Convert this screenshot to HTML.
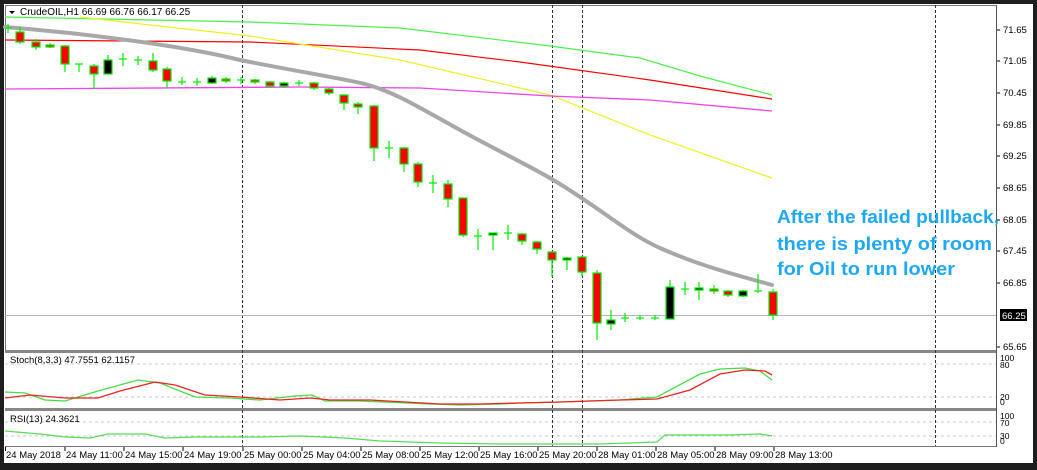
<!DOCTYPE html>
<html><head><meta charset="utf-8"><style>
html,body{margin:0;padding:0;background:#1e1e1e;width:1037px;height:470px;overflow:hidden}
svg{display:block}
text{font-family:"Liberation Sans",sans-serif}
</style></head><body>
<svg width="1037" height="470" viewBox="0 0 1037 470" xmlns="http://www.w3.org/2000/svg">
<rect x="0" y="0" width="1037" height="470" fill="#1e1e1e"/>
<rect x="4" y="4" width="1029" height="459" fill="#fff"/>
<rect x="5.5" y="5.5" width="991" height="345" fill="none" stroke="#777"/>
<rect x="5" y="350" width="992" height="3" fill="#888"/>
<rect x="5" y="408" width="992" height="3" fill="#888"/>
<line x1="5" y1="446.5" x2="997" y2="446.5" stroke="#777"/>
<g stroke="#c8c8c8" stroke-dasharray="3,3">
<line x1="5" y1="364" x2="996" y2="364"/><line x1="5" y1="397" x2="996" y2="397"/>
<line x1="5" y1="422" x2="996" y2="422"/><line x1="5" y1="436" x2="996" y2="436"/>
</g>
<g stroke="#333" stroke-dasharray="3,2">
<line x1="242.5" y1="5" x2="242.5" y2="446"/><line x1="552.5" y1="5" x2="552.5" y2="446"/>
<line x1="582.5" y1="5" x2="582.5" y2="446"/><line x1="935.5" y1="5" x2="935.5" y2="446"/>
</g>
<line x1="5" y1="315.5" x2="996" y2="315.5" stroke="#b0b4bc"/>
<polyline fill="none" stroke="#4cf04c" stroke-width="1.2" points="5,17 250,22 400,28 550,46 640,58 700,76 772,95"/>
<polyline fill="none" stroke="#f00" stroke-width="1.2" points="5,40 250,42 420,50 520,62 650,80 772,99"/>
<polyline fill="none" stroke="#f0f020" stroke-width="1.2" points="80,17 150,25 250,36 400,60 550,95 650,135 772,178"/>
<polyline fill="none" stroke="#ee44ee" stroke-width="1.3" points="5,89 300,87 420,88 550,96 650,100 772,111"/>
<path fill="none" stroke="#a8a8a8" stroke-width="4" stroke-linecap="round" d="M5,27 C80,33 180,45 240,60 C300,72 340,78 365,84 C395,92 420,108 460,130 C500,152 530,166 555,181 C600,208 630,235 660,248 C700,266 740,276 772,285"/>
<g stroke="#00ee00" stroke-width="1.2">
<line x1="8" y1="24" x2="8" y2="33"/><line x1="5" y1="28" x2="12" y2="28"/>
<line x1="20" y1="27" x2="20" y2="44"/><rect x="16" y="32" width="8" height="10" fill="#f00"/>
<line x1="36" y1="39" x2="36" y2="50"/><rect x="32" y="42" width="8" height="5" fill="#f00"/>
<line x1="50" y1="43" x2="50" y2="48"/><rect x="46" y="45" width="8" height="2" fill="#f00"/>
<line x1="65" y1="45" x2="65" y2="72"/><rect x="61" y="46" width="8" height="18" fill="#f00"/>
<line x1="79" y1="64" x2="79" y2="72"/><line x1="75" y1="64" x2="83" y2="64"/>
<line x1="94" y1="64" x2="94" y2="89"/><rect x="90" y="66" width="8" height="8" fill="#f00"/>
<line x1="108" y1="55" x2="108" y2="74"/><rect x="104" y="60" width="8" height="14" fill="#000"/>
<line x1="123" y1="53" x2="123" y2="66"/><line x1="119" y1="59" x2="127" y2="59"/>
<line x1="138" y1="56" x2="138" y2="65"/><line x1="134" y1="60" x2="142" y2="60"/>
<line x1="153" y1="53" x2="153" y2="72"/><rect x="149" y="61" width="8" height="9" fill="#f00"/>
<line x1="167" y1="67" x2="167" y2="88"/><rect x="163" y="69" width="8" height="12" fill="#f00"/>
<line x1="182" y1="77" x2="182" y2="85"/><line x1="178" y1="82" x2="186" y2="82"/>
<line x1="197" y1="78" x2="197" y2="86"/><line x1="193" y1="82" x2="201" y2="82"/>
<line x1="212" y1="76" x2="212" y2="84"/><rect x="208" y="78" width="8" height="5" fill="#000"/>
<line x1="226" y1="77" x2="226" y2="83"/><rect x="222" y="79" width="8" height="2" fill="#f00"/>
<line x1="241" y1="77" x2="241" y2="84"/><line x1="237" y1="80" x2="245" y2="80"/>
<line x1="255" y1="79" x2="255" y2="84"/><rect x="251" y="80" width="8" height="2" fill="#f00"/>
<line x1="270" y1="81" x2="270" y2="88"/><rect x="266" y="82" width="8" height="4" fill="#f00"/>
<line x1="284" y1="82" x2="284" y2="88"/><rect x="280" y="83" width="8" height="3" fill="#000"/>
<line x1="299" y1="80" x2="299" y2="86"/><line x1="295" y1="83" x2="303" y2="83"/>
<line x1="314" y1="82" x2="314" y2="90"/><rect x="310" y="83" width="8" height="5" fill="#f00"/>
<line x1="329" y1="88" x2="329" y2="95"/><rect x="325" y="89" width="8" height="4" fill="#f00"/>
<line x1="344" y1="94" x2="344" y2="110"/><rect x="340" y="95" width="8" height="8" fill="#f00"/>
<line x1="358" y1="102" x2="358" y2="114"/><rect x="354" y="104" width="8" height="3" fill="#f00"/>
<line x1="374" y1="105" x2="374" y2="161"/><rect x="370" y="106" width="8" height="42" fill="#f00"/>
<line x1="389" y1="141" x2="389" y2="158"/><line x1="385" y1="148" x2="393" y2="148"/>
<line x1="404" y1="147" x2="404" y2="172"/><rect x="400" y="148" width="8" height="16" fill="#f00"/>
<line x1="418" y1="162" x2="418" y2="187"/><rect x="414" y="164" width="8" height="18" fill="#f00"/>
<line x1="433" y1="175" x2="433" y2="193"/><line x1="429" y1="183" x2="437" y2="183"/>
<line x1="448" y1="180" x2="448" y2="207"/><rect x="444" y="184" width="8" height="15" fill="#f00"/>
<line x1="463" y1="198" x2="463" y2="237"/><rect x="459" y="198" width="8" height="37" fill="#f00"/>
<line x1="478" y1="229" x2="478" y2="250"/><line x1="474" y1="236" x2="482" y2="236"/>
<line x1="493" y1="233" x2="493" y2="250"/><rect x="489" y="233" width="8" height="2" fill="#000"/>
<line x1="508" y1="225" x2="508" y2="240"/><line x1="504" y1="233" x2="512" y2="233"/>
<line x1="522" y1="233" x2="522" y2="245"/><rect x="518" y="234" width="8" height="7" fill="#f00"/>
<line x1="537" y1="241" x2="537" y2="254"/><rect x="533" y="242" width="8" height="7" fill="#f00"/>
<line x1="552" y1="251" x2="552" y2="277"/><rect x="548" y="252" width="8" height="8" fill="#f00"/>
<line x1="567" y1="257" x2="567" y2="270"/><rect x="563" y="258" width="8" height="2" fill="#000"/>
<line x1="582" y1="256" x2="582" y2="276"/><rect x="578" y="257" width="8" height="15" fill="#f00"/>
<line x1="597" y1="270" x2="597" y2="340"/><rect x="593" y="273" width="8" height="50" fill="#f00"/>
<line x1="611" y1="310" x2="611" y2="330"/><rect x="607" y="320" width="8" height="4" fill="#000"/>
<line x1="625" y1="313" x2="625" y2="322"/><line x1="621" y1="318" x2="629" y2="318"/>
<line x1="640" y1="315" x2="640" y2="320"/><line x1="636" y1="318" x2="644" y2="318"/>
<line x1="655" y1="315" x2="655" y2="320"/><line x1="651" y1="318" x2="659" y2="318"/>
<line x1="670" y1="280" x2="670" y2="319"/><rect x="666" y="287" width="8" height="32" fill="#000"/>
<line x1="685" y1="282" x2="685" y2="295"/><line x1="681" y1="289" x2="689" y2="289"/>
<line x1="699" y1="282" x2="699" y2="300"/><rect x="695" y="288" width="8" height="2" fill="#000"/>
<line x1="714" y1="285" x2="714" y2="294"/><rect x="710" y="289" width="8" height="2" fill="#f00"/>
<line x1="728" y1="290" x2="728" y2="297"/><rect x="724" y="291" width="8" height="4" fill="#f00"/>
<line x1="743" y1="290" x2="743" y2="297"/><rect x="739" y="291" width="8" height="5" fill="#000"/>
<line x1="758" y1="274" x2="758" y2="293"/><line x1="754" y1="291" x2="762" y2="291"/>
<line x1="773" y1="289" x2="773" y2="320"/><rect x="769" y="292" width="8" height="23" fill="#f00"/>
</g>
<polygon points="9,11 15,11 12,14" fill="#000"/>
<text x="20" y="15" font-size="10" fill="#000">CrudeOIL,H1  66.69 66.76 66.17 66.25</text>
<rect x="997" y="5" width="36" height="442" fill="#fff"/>
<line x1="996.5" y1="5" x2="996.5" y2="447" stroke="#555"/>
<g font-size="9.5" fill="#000">
<text x="1003" y="33">71.65</text><text x="1003" y="64">71.05</text><text x="1003" y="96">70.45</text>
<text x="1003" y="128">69.85</text><text x="1003" y="159">69.25</text><text x="1003" y="191">68.65</text>
<text x="1003" y="223">68.05</text><text x="1003" y="254">67.45</text><text x="1003" y="286">66.85</text>
<text x="1003" y="350">65.65</text>
</g>
<g stroke="#000"><line x1="997" y1="30" x2="1000" y2="30"/><line x1="997" y1="61" x2="1000" y2="61"/><line x1="997" y1="93" x2="1000" y2="93"/><line x1="997" y1="125" x2="1000" y2="125"/><line x1="997" y1="156" x2="1000" y2="156"/><line x1="997" y1="188" x2="1000" y2="188"/><line x1="997" y1="220" x2="1000" y2="220"/><line x1="997" y1="251" x2="1000" y2="251"/><line x1="997" y1="283" x2="1000" y2="283"/><line x1="997" y1="347" x2="1000" y2="347"/></g>
<rect x="1000" y="309" width="27" height="12" fill="#000"/>
<text x="1002" y="319" font-size="9.5" fill="#fff">66.25</text>
<g font-size="18.5" font-weight="bold" fill="#1ea7f2" textLength="220">
<text x="777" y="223" textLength="222" lengthAdjust="spacingAndGlyphs">After the failed pullback,</text>
<text x="777" y="250" textLength="215" lengthAdjust="spacingAndGlyphs">there is plenty of room</text>
<text x="777" y="275" textLength="178" lengthAdjust="spacingAndGlyphs">for Oil to run lower</text>
</g>
<g font-size="8.5" fill="#000">
<text x="1000" y="361">100</text><text x="1000" y="368">80</text><text x="1000" y="400">20</text><text x="1000" y="405">0</text>
<text x="1000" y="419">100</text><text x="1000" y="426">70</text><text x="1000" y="439">30</text><text x="1000" y="444">0</text>
</g>
<text x="10" y="363" font-size="9.5" fill="#000">Stoch(8,3,3) 47.7551 62.1157</text>
<polyline fill="none" stroke="#44dd44" stroke-width="1.3" points="5,392 25,393 45,400 65,401 98,391 138,380 160,383 195,397 230,398 260,400 295,396 312,395 325,401 360,401 430,404 460,405 500,404 520,403 560,402 620,400 657,397 700,374 720,369 745,368 760,371 772,380"/>
<polyline fill="none" stroke="#ee2222" stroke-width="1.3" points="5,398 30,395 65,398 98,398 120,391 155,382 175,385 205,395 240,397 280,400 310,398 330,400 370,400 440,404 480,404 520,403 560,402 620,400 657,399 690,390 720,374 745,370 765,371 772,375"/>
<text x="10" y="422" font-size="9.5" fill="#000">RSI(13) 24.3621</text>
<polyline fill="none" stroke="#55dd55" stroke-width="1.2" points="5,431 40,434 65,437 90,438 108,434 145,434 165,438 195,437 230,437 260,437 300,436 345,438 380,441 440,443 500,444 560,444 600,444 657,442 665,435 700,435 730,435 760,434 772,436"/>
<g stroke="#000"><line x1="5.5" y1="447" x2="5.5" y2="451"/><line x1="65" y1="447" x2="65" y2="451"/><line x1="124" y1="447" x2="124" y2="451"/><line x1="183" y1="447" x2="183" y2="451"/><line x1="243" y1="447" x2="243" y2="451"/><line x1="302" y1="447" x2="302" y2="451"/><line x1="361" y1="447" x2="361" y2="451"/><line x1="420" y1="447" x2="420" y2="451"/><line x1="479" y1="447" x2="479" y2="451"/><line x1="538" y1="447" x2="538" y2="451"/><line x1="597" y1="447" x2="597" y2="451"/><line x1="656" y1="447" x2="656" y2="451"/><line x1="715" y1="447" x2="715" y2="451"/><line x1="774" y1="447" x2="774" y2="451"/></g>
<g font-size="9.5" fill="#000">
<text x="6" y="458">24 May 2018</text><text x="66" y="458">24 May 11:00</text><text x="125" y="458">24 May 15:00</text>
<text x="184" y="458">24 May 19:00</text><text x="244" y="458">25 May 00:00</text><text x="303" y="458">25 May 04:00</text>
<text x="362" y="458">25 May 08:00</text><text x="421" y="458">25 May 12:00</text><text x="480" y="458">25 May 16:00</text>
<text x="539" y="458">25 May 20:00</text><text x="598" y="458">28 May 01:00</text><text x="657" y="458">28 May 05:00</text>
<text x="716" y="458">28 May 09:00</text><text x="775" y="458">28 May 13:00</text>
</g>
</svg>
</body></html>
